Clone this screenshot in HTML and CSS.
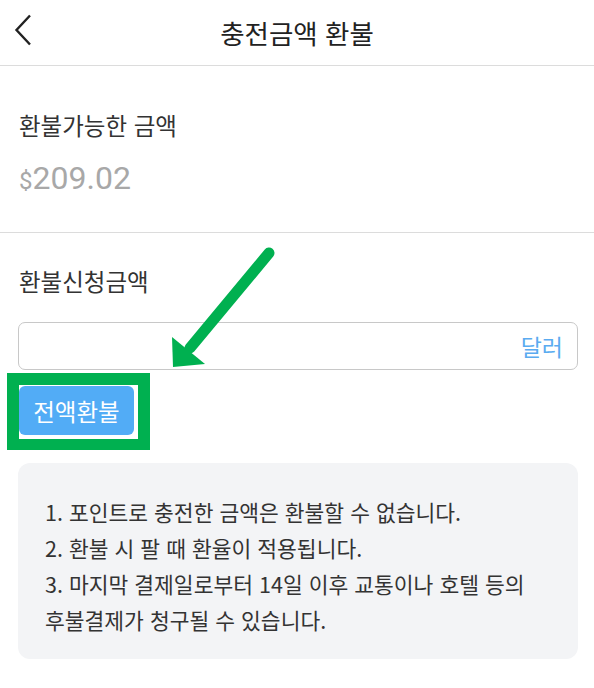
FILE: index.html
```html
<!DOCTYPE html>
<html lang="ko">
<head>
    <meta charset="UTF-8">
    <meta name="viewport" content="width=device-width, initial-scale=1.0">
    <title>충전금액 환불</title>
    <link rel="stylesheet" href="styles.css">
</head>
<body>
    <div class="page">
        <div class="header">
            <svg class="back" width="18" height="32" viewBox="0 0 18 32">
                <path d="M16 1.5 L2.5 16 L16 30.5" fill="none" stroke="#222" stroke-width="2.4"/>
            </svg>
            <h1>충전금액 환불</h1>
        </div>

        <div class="section available">
            <div class="label">환불가능한 금액</div>
            <div class="amount"><span class="cur">$</span>209.02</div>
        </div>

        <div class="section request">
            <div class="label">환불신청금액</div>
            <div class="field">
                <input type="text">
                <span class="unit">달러</span>
            </div>
            <button class="full-btn">전액환불</button>
            <div class="notice">
                <p>1. 포인트로 충전한 금액은 환불할 수 없습니다.</p>
                <p>2. 환불 시 팔 때 환율이 적용됩니다.</p>
                <p>3. 마지막 결제일로부터 14일 이후 교통이나 호텔 등의 후불결제가 청구될 수 있습니다.</p>
            </div>
        </div>

        <!-- annotation -->
        <div class="mark"></div>
        <svg class="arrow" width="594" height="688" viewBox="0 0 594 688">
            <line x1="269" y1="253" x2="190" y2="348" stroke="#00b050" stroke-width="11" stroke-linecap="round"/>
            <polygon points="173,367 172,337 205,364" fill="#00b050"/>
        </svg>
    </div>
</body>
</html>
```

FILE: styles.css
```css
body {
    margin: 0;
    font-family: "Noto Sans CJK KR", "Noto Sans", sans-serif;
    color: #222;
    background: #fff;
}
.page {
    position: relative;
    width: 594px;
    height: 688px;
    overflow: hidden;
}
.header {
    height: 65px;
    border-bottom: 1px solid #dcdcdc;
    display: flex;
    align-items: center;
    justify-content: center;
    position: relative;
}
.header h1 {
    margin: 0;
    font-size: 26.5px;
    font-weight: 400;
    color: #222;
}
.back {
    position: absolute;
    left: 14px;
    top: 14px;
}
.section {
    padding: 0 16px 0 19px;
}
.label {
    font-size: 23.5px;
    line-height: 32px;
    color: #333;
}
.available {
    padding-top: 43px;
    height: 123px;
    border-bottom: 1px solid #dcdcdc;
}
.amount {
    margin-top: 18px;
    font-family: Roboto, "Noto Sans", sans-serif;
    font-size: 32px;
    line-height: 38px;
    color: #a8a8a8;
}
.amount .cur {
    font-size: 24px;
}
.request {
    padding-top: 32px;
}
.field {
    margin-top: 25px;
    margin-left: -1px;
    height: 46px;
    border: 1px solid #c8c8c8;
    border-radius: 7px;
    display: flex;
    align-items: center;
}
.field input {
    flex: 1;
    border: none;
    outline: none;
    background: transparent;
    height: 100%;
}
.unit {
    color: #5aabf0;
    font-size: 23px;
    padding-right: 14px;
}
.full-btn {
    margin-top: 16px;
    width: 115px;
    height: 49px;
    border: none;
    border-radius: 6px;
    background: #52acf6;
    color: #fff;
    font-family: inherit;
    font-size: 23.5px;
    padding: 0;
    display: block;
}
.notice {
    margin-top: 28px;
    margin-left: -1px;
    background: #f3f4f6;
    border-radius: 12px;
    padding: 31px 30px 21px 27px;
    font-size: 21.5px;
    line-height: 36px;
    color: #333;
    word-break: keep-all;
}
.notice p {
    margin: 0;
}
.mark {
    position: absolute;
    left: 7px;
    top: 373px;
    width: 119px;
    height: 54px;
    border: 12px solid #00b050;
    border-bottom-width: 11px;
}
.arrow {
    position: absolute;
    left: 0;
    top: 0;
    pointer-events: none;
}
```
